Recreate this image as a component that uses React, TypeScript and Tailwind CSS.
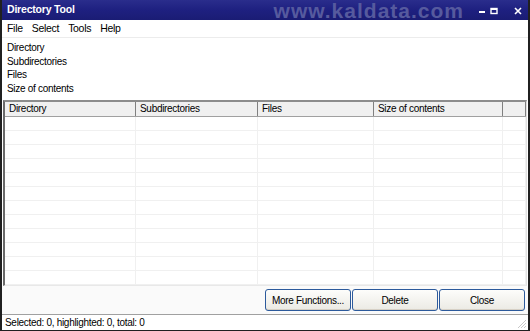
import { ReactNode } from "react";

const columns = [
  { title: "Directory", width: "w-[131px]" },
  { title: "Subdirectories", width: "w-[122px]" },
  { title: "Files", width: "w-[116px]" },
  { title: "Size of contents", width: "w-[129px]" },
  { title: "", width: "flex-1" },
];

function XpButton({ children }: { children: ReactNode }) {
  return (
    <button
      type="button"
      className="flex h-[22px] w-[86px] items-center justify-center whitespace-nowrap rounded-[3px] border border-[#2c5a9c] bg-gradient-to-b from-[#fdfdfb] to-[#ebeae4] text-[10px] tracking-[-0.3px] text-black shadow-[inset_0_-1px_0_#d6d0c5]"
    >
      {children}
    </button>
  );
}

export default function App() {
  const rows = Array.from({ length: 12 }, (_, i) => i);

  return (
    <div className="flex h-[331px] w-[530px] flex-col overflow-hidden border-x-2 border-b border-[#202020] bg-white font-['Liberation_Sans',Arial,sans-serif] text-[10px] tracking-[-0.3px] text-black">
      {/* title bar */}
      <div className="relative flex h-[20px] shrink-0 items-center bg-gradient-to-b from-[#2a2d8c] via-[#1e2080] to-[#1a1c74] pl-[5px] pr-[6px]">
        <span className="text-[10.5px] font-bold tracking-[-0.2px] text-white">Directory Tool</span>
        <span className="ml-auto mr-[14px] mt-[1px] text-[21px] font-black leading-none tracking-[1px] text-[#565a9e]">
          www.kaldata.com
        </span>
        <div className="flex items-center gap-[4px] text-white">
          <svg width="8" height="9" viewBox="0 0 8 9">
            <rect x="1" y="5" width="6" height="2" fill="#fff" />
          </svg>
          <svg width="8" height="9" viewBox="0 0 8 9">
            <rect x="1" y="2.5" width="6" height="5" fill="none" stroke="#fff" strokeWidth="1.4" />
            <rect x="1" y="2" width="6" height="2" fill="#fff" />
          </svg>
          <span className="w-[8px]" />
          <svg width="8" height="9" viewBox="0 0 8 9">
            <path d="M1 2 L7 8 M7 2 L1 8" stroke="#fff" strokeWidth="1.6" />
          </svg>
        </div>
      </div>

      {/* menu bar */}
      <div className="flex h-[18px] shrink-0 items-center gap-[9px] border-b border-[#ececec] pl-[5px] text-[10.5px]">
        <span>File</span>
        <span>Select</span>
        <span>Tools</span>
        <span>Help</span>
      </div>

      {/* field labels */}
      <div className="flex shrink-0 flex-col pl-[5px] pt-[3px] leading-[13.5px]">
        <span>Directory</span>
        <span>Subdirectories</span>
        <span>Files</span>
        <span>Size of contents</span>
      </div>

      {/* list view */}
      <div className="mx-[1px] mt-[5px] flex h-[186px] shrink-0 flex-col border-t-2 border-l-2 border-t-[#8c8c8c] border-l-[#6a6a6a] border-r border-r-[#e0e0e0] border-b border-b-[#e8e8e8]">
        <div className="flex h-[15px] shrink-0 border-b border-[#a0a0a0] bg-[#f0f0f0]">
          {columns.map((col, i) => (
            <div
              key={i}
              className={`${col.width} flex items-center border-r border-[#808080] pl-[4px] leading-none`}
            >
              {col.title}
            </div>
          ))}
        </div>
        <div className="flex flex-1 flex-col overflow-hidden">
          {rows.map((r) => (
            <div key={r} className="flex h-[14px] shrink-0 border-b border-[#f0f0f0]">
              {columns.map((col, i) => (
                <div key={i} className={`${col.width} border-r border-[#f0f0f0]`} />
              ))}
            </div>
          ))}
        </div>
      </div>

      {/* buttons */}
      <div className="flex flex-1 items-center justify-end gap-[1px] bg-[#fafafa] pr-[3px]">
        <XpButton>More Functions...</XpButton>
        <XpButton>Delete</XpButton>
        <XpButton>Close</XpButton>
      </div>

      {/* status bar */}
      <div className="relative flex h-[16px] shrink-0 items-center border-t border-[#a0a0a0] bg-white pl-[3px]">
        <span>Selected: 0, highlighted: 0, total: 0</span>
        <svg className="absolute bottom-[1px] right-[1px]" width="12" height="12" viewBox="0 0 12 12">
          <path d="M11 3 L3 11 M11 6 L6 11 M11 9 L9 11" stroke="#c8c8c8" strokeWidth="1" />
        </svg>
      </div>
    </div>
  );
}
